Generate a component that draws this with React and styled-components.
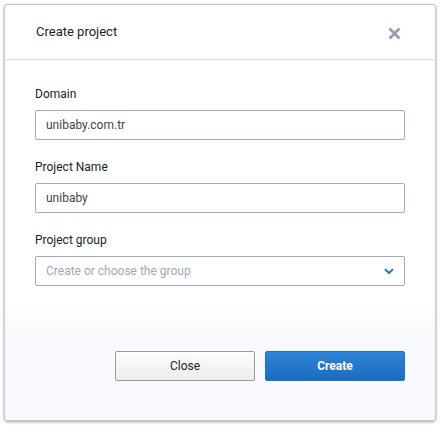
import React from "react";
import styled, { createGlobalStyle } from "styled-components";

const Global = createGlobalStyle`
  html, body { margin: 0; padding: 0; background: #ffffff; }
  body { font-family: Roboto, "Noto Sans", Arial, sans-serif; }
  * { box-sizing: border-box; }
`;

const Page = styled.div`
  width: 440px;
  height: 427px;
  padding: 4px 4px 6px 4px;
  background: #fff;
`;

const Modal = styled.div`
  width: 432px;
  height: 417px;
  border: 1px solid #c4c6cc;
  border-radius: 3px;
  box-shadow: 0 1px 3px rgba(0, 0, 0, 0.35);
  display: flex;
  flex-direction: column;
  overflow: hidden;
  background: linear-gradient(to bottom, #ffffff 0px, #ffffff 300px, #f8f9fc 330px, #f8f9fc 100%);
`;

const Header = styled.div`
  height: 55px;
  border-bottom: 1px solid #d8dbe3;
  display: flex;
  align-items: center;
  justify-content: space-between;
  padding: 0 34px 0 31px;
  flex-shrink: 0;
`;

const Title = styled.h2`
  margin: 0;
  font-size: 13px;
  font-weight: 400;
  color: #222;
  padding-bottom: 1px;
`;

const CloseIcon = styled.button`
  border: 0;
  background: none;
  padding: 0;
  width: 14px;
  height: 14px;
  display: flex;
  align-items: center;
  justify-content: center;
  cursor: pointer;
  margin-top: 2px;
`;

const Body = styled.div`
  flex: 1;
  padding: 27px 30px 0 30px;
  display: flex;
  flex-direction: column;
`;

const Field = styled.div`
  display: flex;
  flex-direction: column;
  margin-bottom: 20px;
`;

const Label = styled.label`
  font-size: 12px;
  line-height: 14px;
  color: #222;
  margin-bottom: 9px;
`;

const Input = styled.div`
  height: 30px;
  border: 1px solid #a3a9bf;
  border-radius: 2px;
  display: flex;
  align-items: center;
  padding: 0 10px;
  font-size: 12px;
  color: ${(p) => (p.$placeholder ? "#a2a7bd" : "#444")};
  justify-content: space-between;
  background: #fff;
`;

const Footer = styled.div`
  display: flex;
  justify-content: flex-end;
  gap: 10px;
  padding: 0 30px 39px 30px;
`;

const Button = styled.button`
  width: 140px;
  height: 30px;
  border-radius: 2px;
  font-family: Roboto, Arial, sans-serif;
  font-size: 12px;
  cursor: pointer;
  ${(p) =>
    p.$primary
      ? `
    border: 1px solid #1f72c6;
    background: linear-gradient(to bottom, #2d84d8, #1c6bbf);
    color: #fff;
    font-weight: 700;
  `
      : `
    border: 1px solid #9b9b9b;
    background: linear-gradient(to bottom, #fdfdfd, #ececec);
    color: #222;
    font-weight: 400;
  `}
`;

export default function App() {
  return (
    <>
      <Global />
      <Page>
        <Modal>
          <Header>
            <Title>Create project</Title>
            <CloseIcon aria-label="close">
              <svg width="13" height="13" viewBox="0 0 13 13">
                <path d="M1.5 1.5 L11.5 11.5 M11.5 1.5 L1.5 11.5" stroke="#959bb2" strokeWidth="2.8" strokeLinecap="butt" />
              </svg>
            </CloseIcon>
          </Header>
          <Body>
            <Field>
              <Label>Domain</Label>
              <Input>unibaby.com.tr</Input>
            </Field>
            <Field>
              <Label>Project Name</Label>
              <Input>unibaby</Input>
            </Field>
            <Field>
              <Label>Project group</Label>
              <Input $placeholder>
                <span>Create or choose the group</span>
                <svg width="10" height="7" viewBox="0 0 10 7">
                  <path d="M1 1.2 L5 5 L9 1.2" stroke="#2a77c6" strokeWidth="2" fill="none" />
                </svg>
              </Input>
            </Field>
          </Body>
          <Footer>
            <Button>Close</Button>
            <Button $primary>Create</Button>
          </Footer>
        </Modal>
      </Page>
    </>
  );
}
